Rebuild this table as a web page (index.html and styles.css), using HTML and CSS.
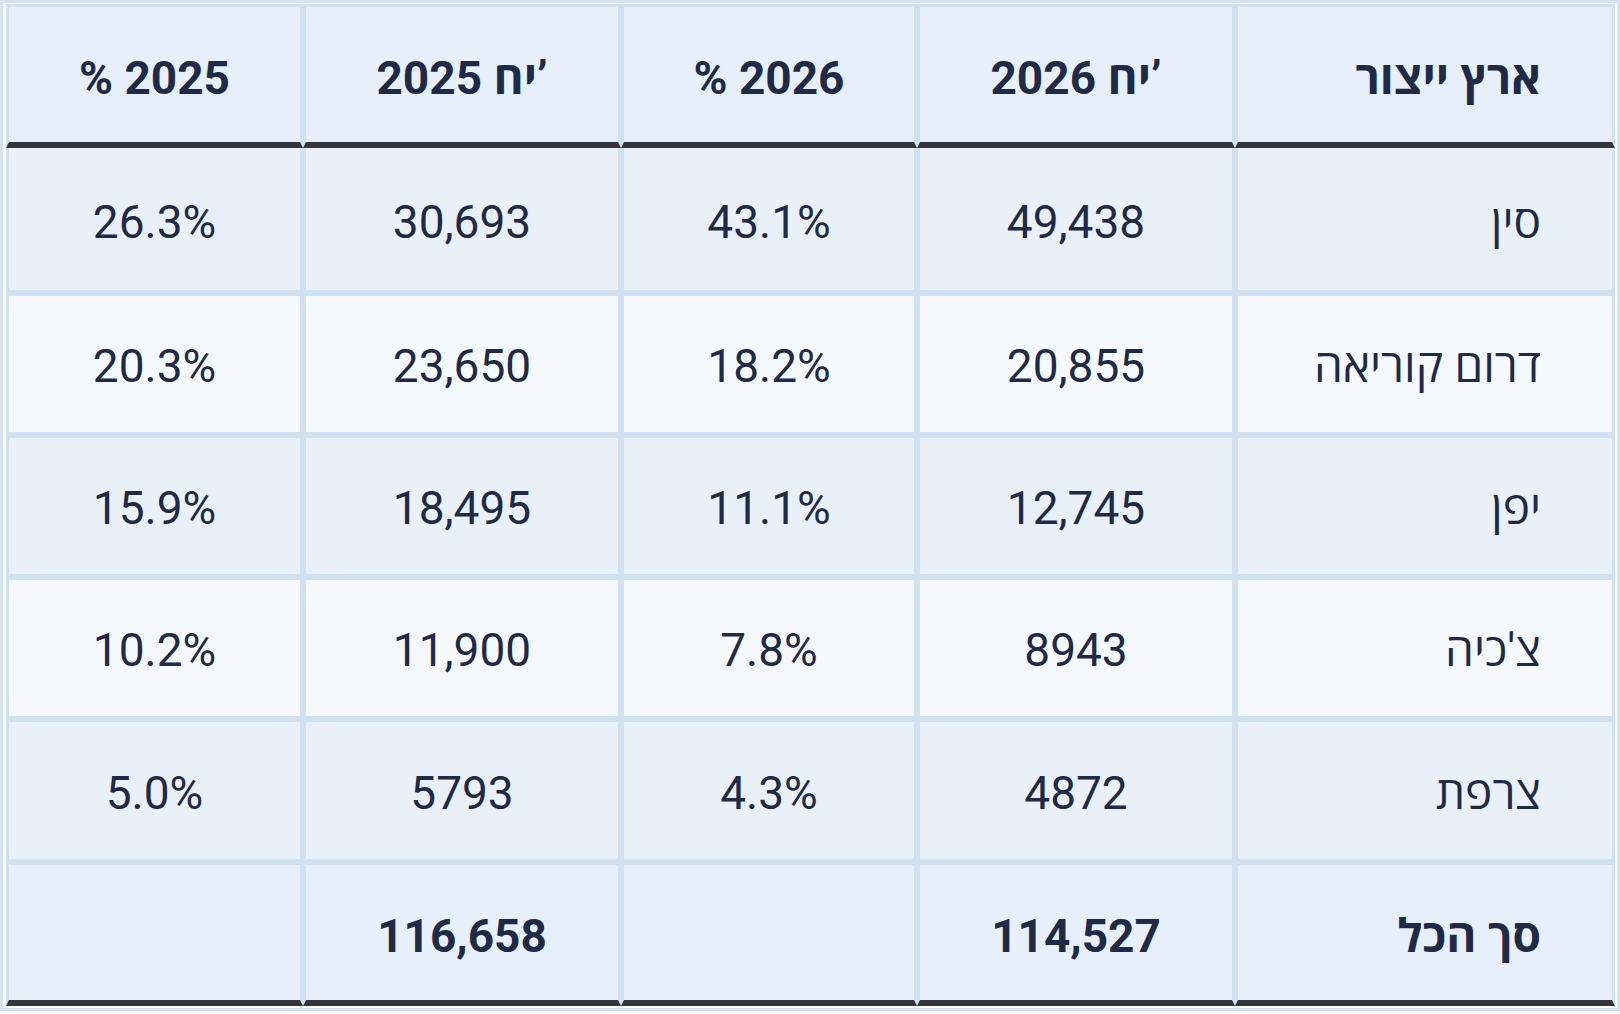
FILE: index.html
```html
<!DOCTYPE html>
<html lang="he" dir="rtl">
<head>
<meta charset="utf-8">
<title>ארץ ייצור</title>
<link rel="stylesheet" href="styles.css">
</head>
<body>
<div class="frame">
  <div class="grid" role="table">
    <div class="cell head country" role="columnheader">ארץ ייצור</div>
    <div class="cell head" role="columnheader"><span dir="ltr">2026 יח’</span></div>
    <div class="cell head" role="columnheader">2026 %</div>
    <div class="cell head" role="columnheader"><span dir="ltr">2025 יח’</span></div>
    <div class="cell head" role="columnheader">2025 %</div>

    <div class="cell odd first country">סין</div>
    <div class="cell odd first">49,438</div>
    <div class="cell odd first">43.1%</div>
    <div class="cell odd first">30,693</div>
    <div class="cell odd first">26.3%</div>

    <div class="cell even country">דרום קוריאה</div>
    <div class="cell even">20,855</div>
    <div class="cell even">18.2%</div>
    <div class="cell even">23,650</div>
    <div class="cell even">20.3%</div>

    <div class="cell odd country">יפן</div>
    <div class="cell odd">12,745</div>
    <div class="cell odd">11.1%</div>
    <div class="cell odd">18,495</div>
    <div class="cell odd">15.9%</div>

    <div class="cell even country">צ'כיה</div>
    <div class="cell even">8943</div>
    <div class="cell even">7.8%</div>
    <div class="cell even">11,900</div>
    <div class="cell even">10.2%</div>

    <div class="cell odd country">צרפת</div>
    <div class="cell odd">4872</div>
    <div class="cell odd">4.3%</div>
    <div class="cell odd">5793</div>
    <div class="cell odd">5.0%</div>

    <div class="cell total country">סך הכל</div>
    <div class="cell total">114,527</div>
    <div class="cell total"></div>
    <div class="cell total">116,658</div>
    <div class="cell total"></div>
  </div>
</div>
</body>
</html>
```

FILE: styles.css
```css
html, body {
  margin: 0;
  padding: 0;
  background: #ffffff;
}

body {
  font-family: Roboto, "Open Sans", "Noto Sans", "DejaVu Sans", sans-serif;
  color: #1e2a46;
}

.frame {
  width: 1611px;
  border: 3px solid #d3e3f3;
  padding: 1px 2px 2px 1px;
  background: #ffffff;
}

.grid {
  display: grid;
  grid-template-columns: 380px 318px 296px 318px 297px;
  grid-template-rows: 144px 145px 142px 142px 142px 143px 144px;
}

.cell {
  box-sizing: border-box;
  border: 3px solid #d0e1f2;
  display: flex;
  align-items: center;
  justify-content: center;
  font-size: 46px;
  line-height: 1;
  padding-top: 4px;
  white-space: nowrap;
}

.country {
  justify-content: flex-start;
  padding-right: 71px;
}

.head {
  background: #e7f0fa;
  font-weight: 700;
  border-bottom: 6px solid #333538;
  padding-top: 6px;
}

.first {
  border-top: 0;
  padding-top: 5px;
}

.odd {
  background: #eaf0f8;
}

.even {
  background: #f5f9fe;
}

.total {
  background: #e7f0fa;
  font-weight: 700;
  border-bottom: 6px solid #333538;
  padding-top: 6px;
}
```
